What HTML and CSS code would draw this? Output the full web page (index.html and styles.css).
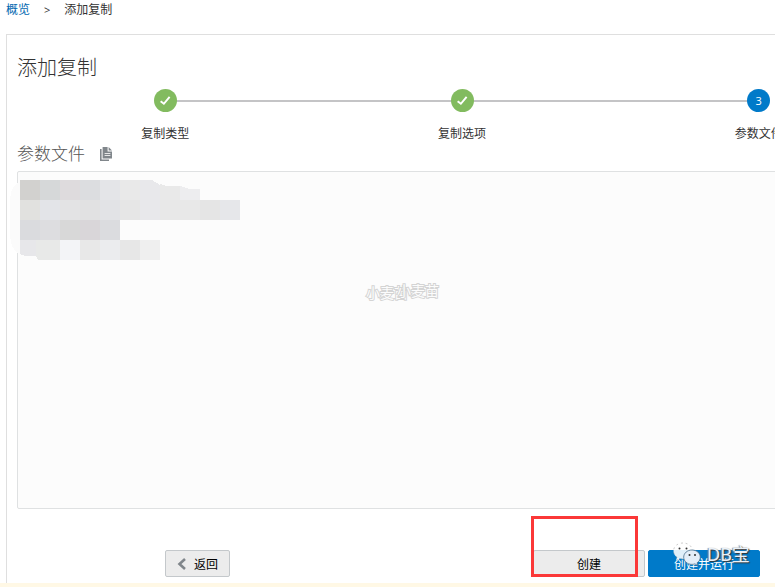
FILE: index.html
```
<!DOCTYPE html>
<html lang="zh-CN">
<head>
  <meta charset="UTF-8">
  <meta name="viewport" content="width=device-width, initial-scale=1">
  <title>添加复制</title>
  <link rel="stylesheet" href="styles.css">
</head>
<body>
  <nav class="breadcrumb">
    <a href="#">概览</a>
    <span class="separator">&gt;</span>
    <span>添加复制</span>
  </nav>

  <main class="panel">
    <h1>添加复制</h1>

    <ol class="train">
      <li class="step done">
        <span class="marker">
          <svg width="13" height="13" viewBox="0 0 12 12"><path d="M1.500 6.600 4.500 9 9.800 2.600" fill="none" stroke="#fff" stroke-width="1.800"/></svg>
        </span>
        <span class="label">复制类型</span>
      </li>
      <li class="step done">
        <span class="marker">
          <svg width="13" height="13" viewBox="0 0 12 12"><path d="M1.500 6.600 4.500 9 9.800 2.600" fill="none" stroke="#fff" stroke-width="1.800"/></svg>
        </span>
        <span class="label">复制选项</span>
      </li>
      <li class="step current">
        <span class="marker">3</span>
        <span class="label">参数文件</span>
      </li>
    </ol>

    <div class="file-title">
      <label for="params">参数文件</label>
      <button type="button" class="copy" aria-label="复制">
        <svg width="12" height="14" viewBox="0 0 12 14">
          <path d="M0 2h1.600v10.400H9V14H0z" fill="#80868b"/>
          <path d="M2.600 0h5v4.400H12v7.200H2.600z" fill="#80868b"/>
          <path d="M8.600 0 12 3.400H8.600z" fill="#80868b"/>
          <path d="M4.600 6.500h5.800M4.600 8.500h5.800" stroke="#fff" stroke-width=".8"/>
        </svg>
      </button>
    </div>

    <div class="editor">
      <textarea id="params" spellcheck="false"></textarea>
      <svg class="mask" width="232" height="90" viewBox="0 0 232 90" shape-rendering="crispEdges">
        <path d="M10 10Q0 14 0 30V60Q0 78 10 82H30V0H10z" fill="#fbfbfb"/>
        <g>
          <path d="M10 8h20v20H10z" fill="#d2d1cf"/><path d="M30 8h20v20H30z" fill="#d6d8d9"/>
          <path d="M50 8h20v20H50z" fill="#dedbdd"/><path d="M70 8h20v20H70z" fill="#dcdde0"/>
          <path d="M90 8h20v20H90z" fill="#e4e5e8"/><path d="M110 8h20v20H110z" fill="#e9e9e9"/>
          <path d="M130 8h12l8 5v15H130z" fill="#e8e8eb"/><path d="M150 12l6 2h14v14H150z" fill="#e9e9e9"/>
          <path d="M170 14l10 3h10v11H170z" fill="#ededef"/>
        </g>
        <g>
          <path d="M10 28h20v20H10z" fill="#e1e1df"/><path d="M30 28h20v20H30z" fill="#e3e4e8"/>
          <path d="M50 28h20v20H50z" fill="#e3e3e4"/><path d="M70 28h20v20H70z" fill="#e1e1e2"/>
          <path d="M90 28h20v20H90z" fill="#e2e3e6"/><path d="M110 28h20v20H110z" fill="#e6e6e6"/>
          <path d="M130 28h20v20H130z" fill="#e8e8eb"/><path d="M150 28h40v20H150z" fill="#e8e8e8"/>
          <path d="M190 28h20v20H190z" fill="#e5e5e5"/><path d="M210 28h20v20H210z" fill="#e6e7ea"/>
        </g>
        <g>
          <path d="M10 48h20v20H10z" fill="#dadbde"/><path d="M30 48h20v20H30z" fill="#dddde0"/>
          <path d="M50 48h20v20H50z" fill="#d8d8d8"/><path d="M70 48h20v20H70z" fill="#d9d6d9"/>
          <path d="M90 48h20v20H90z" fill="#dbdcdf"/>
        </g>
        <g>
          <path d="M10 68h20v16H15l-5-2z" fill="#e7e7ea"/><path d="M26 68h24v20H28l-2-4z" fill="#e8e9e8"/>
          <path d="M50 68h20v20H50z" fill="#f3f4f7"/><path d="M70 68h20v20H70z" fill="#e8e8e8"/>
          <path d="M90 68h20v20H90z" fill="#ebecee"/><path d="M110 68h20v20H110z" fill="#e7e7e7"/>
          <path d="M130 68h20v20H130z" fill="#efefef"/>
        </g>
      </svg>
      <span class="stamp stamp-left">小麦苗</span>
      <span class="stamp stamp-right">小麦苗</span>
    </div>

    <div class="actions">
      <button type="button" class="btn back">
        <svg width="9" height="12" viewBox="0 0 9 12"><path d="M8 1 2.500 6 8 11" fill="none" stroke="#80868b" stroke-width="2.600"/></svg>
        返回
      </button>
      <div class="actions-right">
        <div class="create-wrap">
          <button type="button" class="btn wide">创建</button>
          <span class="highlight"></span>
        </div>
        <div class="run-wrap">
          <button type="button" class="btn wide primary">创建并运行</button>
          <div class="brand">
            <svg width="28" height="24" viewBox="0 0 28 24">
              <path d="M10 1C4.500 1 .5 4.500 .5 9c0 2.600 1.300 4.700 3.500 6.200L3 18.500l3.700-2c1 .3 2.200.5 3.300.5 5.500 0 9.500-3.600 9.500-8S15.500 1 10 1z" fill="#fff" fill-opacity=".88" stroke="#999" stroke-width=".5" stroke-dasharray="2 3"/>
              <path d="M19 8c-4.700 0-8.300 3.200-8.300 7.200s3.600 7.200 8.300 7.200c1 0 2-.2 2.900-.5l3 1.700-.8-2.800c2-1.300 3.200-3.300 3.200-5.600C27.300 11.200 23.700 8 19 8z" fill="#e4eef8" stroke="#476c89" stroke-width=".8"/>
              <g fill="#333"><circle cx="6.500" cy="6.500" r="1"/><circle cx="13.500" cy="6.500" r="1"/><circle cx="16.500" cy="13" r="1"/><circle cx="22" cy="13" r="1"/></g>
            </svg>
            <span>DB宝</span>
          </div>
        </div>
      </div>
    </div>
  </main>
  <div class="bottom-strip"></div>
</body>
</html>
```
FILE: styles.css
```
* {
  box-sizing: border-box;
}

body {
  margin: 0;
  height: 100vh;
  display: flex;
  flex-direction: column;
  overflow: hidden;
  background: #fff;
  color: #333;
  font-family: "Open Sans", "Noto Sans CJK SC", sans-serif;
  font-size: 12px;
}

.breadcrumb {
  display: flex;
  gap: 14px;
  padding: 0 6px 14px;
  line-height: 20px;
}

.breadcrumb a {
  color: #0067b0;
  text-decoration: none;
}

.breadcrumb .separator {
  font-size: 11px;
}

.panel {
  flex: 1;
  min-height: 0;
  display: flex;
  flex-direction: column;
  overflow: hidden;
  margin-left: 6px;
  padding: 16px 0 6px 10px;
  border: 1px solid #dfdfdf;
  border-width: 1px 0 0 1px;
}

h1 {
  margin: 0;
  font-size: 20px;
  font-weight: 300;
  line-height: 34px;
}

/* the train runs past the right edge of the window */
.train {
  display: flex;
  width: calc(100% + 132px);
  margin: 0;
  padding: 4px 0 0;
  list-style: none;
}

.step {
  flex: 1;
  display: flex;
  flex-direction: column;
  align-items: center;
  gap: 12px;
  position: relative;
}

.step.done::after {
  content: "";
  position: absolute;
  top: 11px;
  left: 50%;
  width: 100%;
  height: 2px;
  background: #c4c4c6;
}

.marker {
  display: flex;
  align-items: center;
  justify-content: center;
  width: 23px;
  height: 23px;
  border-radius: 50%;
  background: #82bb5f;
  color: #fff;
  font-size: 11px;
  z-index: 1;
}

.step.current .marker {
  background: #007ac9;
}

.label {
  line-height: 20px;
}

.file-title {
  display: flex;
  align-items: center;
  gap: 15px;
  height: 27px;
  padding-bottom: 7px;
  color: #555;
  font-size: 17px;
  font-weight: 300;
  line-height: 20px;
}

.copy {
  display: flex;
  padding: 0;
  border: 0;
  background: none;
}

.editor {
  flex: 1;
  min-height: 0;
  position: relative;
}

.editor textarea {
  display: block;
  width: calc(100% + 132px);
  height: 100%;
  padding: 8px;
  border: 1px solid #dfe1e2;
  border-radius: 2px;
  background: #fcfcfc;
  font: inherit;
  resize: none;
}

.mask {
  position: absolute;
  top: 1px;
  left: -7px;
}

.stamp {
  position: absolute;
  font-size: 14px;
  font-weight: 400;
  line-height: 20px;
  color: #fcfcfc;
  -webkit-text-stroke: 2px #d4d4d4;
  paint-order: stroke fill;
}

.stamp-left {
  top: 112px;
  left: 349px;
}

.stamp-right {
  top: 110px;
  left: 380px;
}

.actions {
  display: flex;
  justify-content: space-between;
  padding: 41px 15px 0 148px;
}

.actions-right {
  display: flex;
  gap: 3px;
}

.btn {
  display: flex;
  align-items: center;
  justify-content: center;
  gap: 8px;
  width: 65px;
  height: 27px;
  padding: 0;
  border: 1px solid #c4c8cb;
  border-radius: 2px;
  background: #ececec;
  color: #000;
  font: inherit;
}

.btn.wide {
  width: 112px;
}

.btn.primary {
  border-color: #007ac9;
  background: #007ac9;
  color: #fff;
}

.create-wrap,
.run-wrap {
  position: relative;
}

.highlight {
  position: absolute;
  top: -34px;
  left: -2px;
  width: 107px;
  height: 61px;
  border: 3px solid #fb3838;
}

.brand {
  position: absolute;
  top: -9px;
  left: 25px;
  display: flex;
  align-items: center;
  gap: 6px;
  color: #eaf2fa;
  font-family: "Noto Sans", "Noto Sans CJK SC", sans-serif;
  font-size: 18px;
  line-height: 26px;
  text-shadow: 1px 1px 1px #333, -1px 0 1px #888;
  white-space: nowrap;
  pointer-events: none;
}

.bottom-strip {
  height: 4px;
  background: #fff8e5;
}
```
